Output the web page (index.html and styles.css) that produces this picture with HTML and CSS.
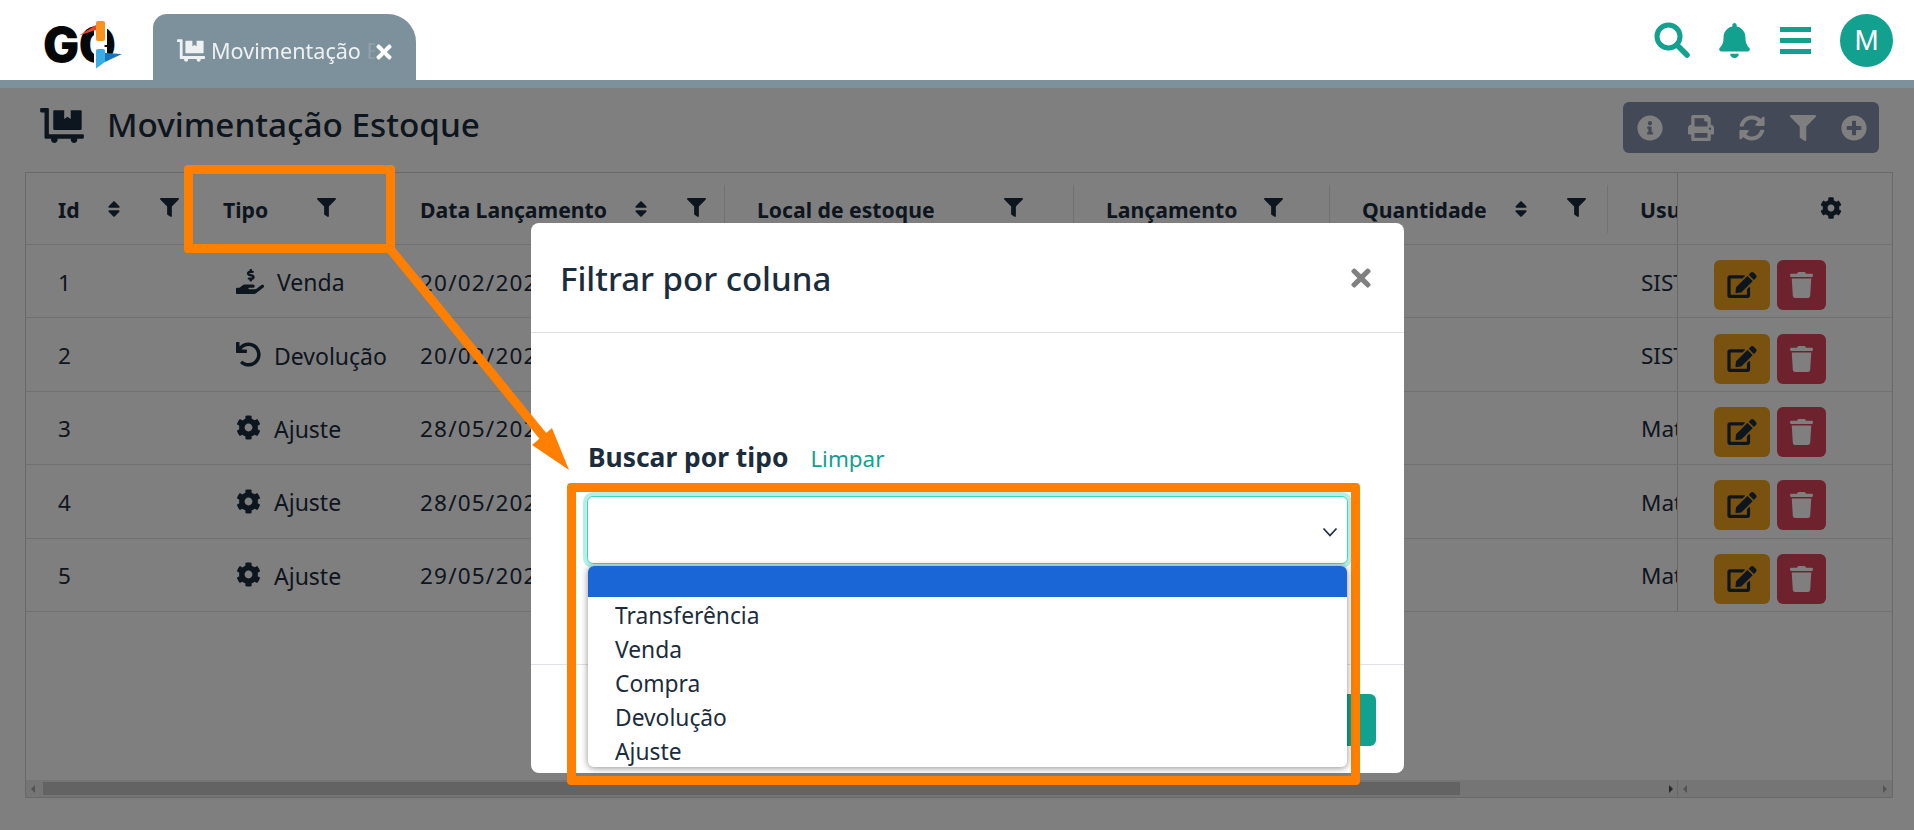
FILE: index.html
```html
<!DOCTYPE html>
<html lang="pt-BR">
<head>
  <meta charset="UTF-8" />
  <title>Movimentação Estoque</title>
  <link rel="stylesheet" href="styles.css">
</head>
<body>

<svg class="defs" xmlns="http://www.w3.org/2000/svg">
  <symbol id="i-filter" viewBox="0 0 512 512"><path d="M487.976 0H24.028C2.71 0-8.047 25.866 7.058 40.971L192 225.941V432c0 7.831 3.821 15.17 10.237 19.662l80 55.98C298.02 518.69 320 507.493 320 487.98V225.941l184.947-184.97C520.021 25.896 509.338 0 487.976 0z"/></symbol>
  <symbol id="i-sort" viewBox="0 0 320 512"><path d="M41 288h238c21.4 0 32.1 25.9 17 41L177 448c-9.4 9.4-24.6 9.4-33.9 0L24 329c-15.1-15.1-4.4-41 17-41zm255-105L177 64c-9.4-9.4-24.6-9.4-33.9 0L24 183c-15.1 15.1-4.4 41 17 41h238c21.4 0 32.1-25.9 17-41z"/></symbol>
  <symbol id="i-cog" viewBox="0 0 512 512"><path d="M487.4 315.7l-42.6-24.6c4.3-23.2 4.3-47 0-70.2l42.6-24.6c4.9-2.8 7.1-8.6 5.5-14-11.1-35.6-30-67.8-54.7-94.6-3.8-4.1-10-5.1-14.8-2.3L380.8 110c-17.9-15.4-38.5-27.3-60.8-35.1V25.8c0-5.6-3.9-10.5-9.4-11.7-36.7-8.2-74.3-7.8-109.2 0-5.5 1.2-9.4 6.1-9.4 11.7V75c-22.2 7.9-42.8 19.8-60.8 35.1L88.7 85.5c-4.9-2.8-11-1.9-14.8 2.3-24.7 26.7-43.6 58.9-54.7 94.6-1.7 5.4.6 11.2 5.5 14L67.3 221c-4.3 23.2-4.3 47 0 70.2l-42.6 24.6c-4.9 2.8-7.1 8.6-5.5 14 11.1 35.6 30 67.8 54.7 94.6 3.8 4.1 10 5.1 14.8 2.3l42.6-24.6c17.9 15.4 38.5 27.3 60.8 35.1v49.2c0 5.6 3.9 10.5 9.4 11.7 36.7 8.2 74.3 7.8 109.2 0 5.5-1.2 9.4-6.1 9.4-11.7v-49.2c22.2-7.9 42.8-19.8 60.8-35.1l42.6 24.6c4.9 2.8 11 1.9 14.8-2.3 24.7-26.7 43.6-58.9 54.7-94.6 1.5-5.5-.7-11.3-5.6-14.1zM256 336c-44.1 0-80-35.9-80-80s35.9-80 80-80 80 35.9 80 80-35.9 80-80 80z"/></symbol>
  <symbol id="i-dolly" viewBox="0 0 640 512"><path d="M208 320h384c8.8 0 16-7.2 16-16V48c0-8.8-7.2-16-16-16H448v128l-48-32-48 32V32H208c-8.8 0-16 7.2-16 16v256c0 8.8 7.2 16 16 16zm416 64H128V16c0-8.8-7.2-16-16-16H16C7.2 0 0 7.2 0 16v32c0 8.8 7.2 16 16 16h48v368c0 8.8 7.2 16 16 16h82.9c-1.8 5-2.9 10.4-2.9 16 0 26.5 21.5 48 48 48s48-21.5 48-48c0-5.6-1.2-11-2.9-16H451c-1.8 5-2.9 10.4-2.9 16 0 26.5 21.5 48 48 48s48-21.5 48-48c0-5.6-1.2-11-2.9-16H624c8.8 0 16-7.2 16-16v-32c0-8.8-7.2-16-16-16z"/></symbol>
  <symbol id="i-times" viewBox="0 0 352 512"><path d="M242.72 256l100.07-100.07c12.28-12.28 12.28-32.19 0-44.48l-22.24-22.24c-12.28-12.28-32.19-12.28-44.48 0L176 189.28 75.93 89.21c-12.28-12.28-32.19-12.28-44.48 0L9.21 111.45c-12.28 12.28-12.28 32.19 0 44.48L109.28 256 9.21 356.07c-12.28 12.28-12.28 32.19 0 44.48l22.24 22.24c12.28 12.28 32.2 12.28 44.48 0L176 322.72l100.07 100.07c12.28 12.28 32.2 12.28 44.48 0l22.24-22.24c12.28-12.28 12.28-32.19 0-44.48L242.72 256z"/></symbol>
  <symbol id="i-edit" viewBox="0 0 576 512"><path d="M402.6 83.2l90.2 90.2c3.8 3.8 3.8 10 0 13.8L274.4 405.6l-92.8 10.3c-12.4 1.4-22.9-9.1-21.5-21.5l10.3-92.8L388.8 83.2c3.8-3.8 10-3.8 13.8 0zm162-22.9l-48.8-48.8c-15.2-15.2-39.9-15.2-55.2 0l-35.4 35.4c-3.8 3.8-3.8 10 0 13.8l90.2 90.2c3.8 3.8 10 3.8 13.8 0l35.4-35.4c15.2-15.3 15.2-40 0-55.2zM384 346.2V448H64V128h229.8c3.2 0 6.2-1.3 8.5-3.5l40-40c7.6-7.6 2.2-20.5-8.5-20.5H48C21.5 64 0 85.5 0 112v352c0 26.5 21.5 48 48 48h352c26.5 0 48-21.5 48-48V306.2c0-10.7-12.9-16-20.5-8.5l-40 40c-2.2 2.3-3.5 5.3-3.5 8.5z"/></symbol>
  <symbol id="i-trash" viewBox="0 0 448 512"><path d="M432 32H312l-9.4-18.7A24 24 0 0 0 281.1 0H166.8a23.72 23.72 0 0 0-21.4 13.3L136 32H16A16 16 0 0 0 0 48v32a16 16 0 0 0 16 16h416a16 16 0 0 0 16-16V48a16 16 0 0 0-16-16zM53.2 467a48 48 0 0 0 47.9 45h245.8a48 48 0 0 0 47.9-45L416 128H32z"/></symbol>
</svg>

<header class="topbar">
  <div class="logo">
    <span class="logo-text">GO</span>
    <svg class="logo-mark" viewBox="0 0 100 80">
      <path d="M50 19h13v26H50zM50 47h13v23H50z" fill="#fff"/>
      <path d="M35 35.500 L52 25 V30 Z" fill="#e8452c"/>
      <rect x="52" y="21" width="9" height="20" rx="2" fill="#f7931e"/>
      <path d="M61 62 L78 54 L61 53 Z" fill="#1c75bc"/>
      <path d="M52 50.500 Q52 49 54 49 H59 Q61 49 61 51 V62 L52 68.500 Z" fill="#38ade6"/>
    </svg>
  </div>
  <div class="tab">
    <svg class="tab-icon"><use href="#i-dolly"/></svg>
    <span class="tab-label">Movimentação Estoque</span>
    <svg class="tab-close"><use href="#i-times"/></svg>
  </div>
  <div class="top-actions">
    <svg class="top-search" viewBox="0 0 36 36"><circle cx="14.500" cy="14.500" r="11.500" fill="none" stroke="#12a08f" stroke-width="5"/><path d="M23 23 L33 33" stroke="#12a08f" stroke-width="5.500" stroke-linecap="round"/></svg>
    <svg class="top-bell" viewBox="0 0 448 512"><path fill="#12a08f" d="M224 512c35.32 0 63.97-28.65 63.97-64H160.03c0 35.35 28.65 64 63.97 64zm215.39-149.71c-19.32-20.76-55.47-51.99-55.47-154.29 0-77.7-54.48-139.9-127.94-155.16V32c0-17.67-14.32-32-31.98-32s-31.98 14.33-31.98 32v20.84C118.56 68.1 64.08 130.3 64.08 208c0 102.3-36.15 133.53-55.47 154.29-6 6.45-8.66 14.16-8.61 21.71.11 16.4 12.98 32 32.1 32h383.8c19.12 0 32-15.6 32.1-32 .05-7.55-2.61-15.27-8.61-21.71z"/></svg>
    <div class="top-menu"><span></span><span></span><span></span></div>
    <div class="avatar">M</div>
  </div>
</header>
<div class="stripe"></div>

<main class="content">
  <div class="title-row">
    <div class="title">
      <svg class="title-icon"><use href="#i-dolly"/></svg>
      <h1>Movimentação Estoque</h1>
    </div>
    <div class="toolbar">
      <svg class="tool" viewBox="0 0 512 512"><path d="M256 8C119.043 8 8 119.083 8 256c0 136.997 111.043 248 248 248s248-111.003 248-248C504 119.083 392.957 8 256 8zm0 110c23.196 0 42 18.804 42 42s-18.804 42-42 42-42-18.804-42-42 18.804-42 42-42zm56 254c0 6.627-5.373 12-12 12h-88c-6.627 0-12-5.373-12-12v-24c0-6.627 5.373-12 12-12h12v-64h-12c-6.627 0-12-5.373-12-12v-24c0-6.627 5.373-12 12-12h64c6.627 0 12 5.373 12 12v100h12c6.627 0 12 5.373 12 12v24z"/></svg>
      <svg class="tool" viewBox="0 0 512 512"><path d="M448 192V77.25c0-8.49-3.37-16.62-9.37-22.63L393.37 9.37c-6-6-14.14-9.37-22.63-9.37H96C78.33 0 64 14.33 64 32v160c-35.35 0-64 28.65-64 64v112c0 8.84 7.16 16 16 16h48v96c0 17.67 14.33 32 32 32h320c17.67 0 32-14.33 32-32v-96h48c8.84 0 16-7.16 16-16V256c0-35.35-28.65-64-64-64zm-64 256H128v-96h256v96zm0-224H128V64h192v48c0 8.84 7.16 16 16 16h48v96zm48 72c-13.25 0-24-10.75-24-24 0-13.26 10.75-24 24-24s24 10.74 24 24c0 13.25-10.75 24-24 24z"/></svg>
      <svg class="tool" viewBox="0 0 512 512"><path d="M370.72 133.28C339.458 104.008 298.888 87.962 255.848 88c-77.458.068-144.328 53.178-162.791 126.85-1.344 5.363-6.122 9.15-11.651 9.15H24.103c-7.498 0-13.194-6.807-11.807-14.176C33.933 94.924 134.813 8 256 8c66.448 0 126.791 26.136 171.315 68.685L463.03 40.97C478.149 25.851 504 36.559 504 57.941V192c0 13.255-10.745 24-24 24H345.941c-21.382 0-32.09-25.851-16.971-40.971l41.75-41.749zM32 296h134.059c21.382 0 32.09 25.851 16.971 40.971l-41.75 41.75c31.262 29.273 71.835 45.319 114.876 45.28 77.418-.07 144.315-53.144 162.787-126.849 1.344-5.363 6.122-9.15 11.651-9.15h57.304c7.498 0 13.194 6.807 11.807 14.176C478.067 417.076 377.187 504 256 504c-66.448 0-126.791-26.136-171.315-68.685L48.97 471.03C33.851 486.149 8 475.441 8 454.059V320c0-13.255 10.745-24 24-24z"/></svg>
      <svg class="tool"><use href="#i-filter"/></svg>
      <svg class="tool" viewBox="0 0 512 512"><path d="M256 8C119 8 8 119 8 256s111 248 248 248 248-111 248-248S393 8 256 8zm144 276c0 6.6-5.4 12-12 12h-92v92c0 6.6-5.4 12-12 12h-56c-6.6 0-12-5.4-12-12v-92h-92c-6.6 0-12-5.4-12-12v-56c0-6.6 5.4-12 12-12h92v-92c0-6.600 5.4-12 12-12h56c6.6 0 12 5.4 12 12v92h92c6.6 0 12 5.4 12 12v56z"/></svg>
    </div>
  </div>

  <div class="grid">
    <div class="grid-body">
      <div class="grid-main">
        <div class="row row-head">
          <div class="th"><span class="th-label">Id</span><svg class="ic-sort"><use href="#i-sort"/></svg><svg class="ic-filter"><use href="#i-filter"/></svg></div>
          <div class="th"><span class="th-label th-tipo">Tipo</span><svg class="ic-filter"><use href="#i-filter"/></svg></div>
          <div class="th th-sep"><span class="th-label">Data Lançamento</span><svg class="ic-sort"><use href="#i-sort"/></svg><svg class="ic-filter"><use href="#i-filter"/></svg></div>
          <div class="th th-sep"><span class="th-label th-local">Local de estoque</span><svg class="ic-filter"><use href="#i-filter"/></svg></div>
          <div class="th th-sep"><span class="th-label">Lançamento</span><svg class="ic-filter"><use href="#i-filter"/></svg></div>
          <div class="th th-sep"><span class="th-label">Quantidade</span><svg class="ic-sort"><use href="#i-sort"/></svg><svg class="ic-filter"><use href="#i-filter"/></svg></div>
          <div class="th"><span class="th-label">Usuário</span></div>
        </div>
        <div class="row">
          <div class="td">1</div>
          <div class="td td-tipo"><svg class="ic-hand" viewBox="0 0 576 512"><path d="M271.06,144.3l54.27,14.3a8.59,8.59,0,0,1,6.63,8.1c0,4.6-4.09,8.4-9.12,8.4h-35.6a30,30,0,0,1-11.19-2.2c-5.24-2.2-11.28-1.7-15.3,2l-19,17.5a11.68,11.68,0,0,0-2.25,2.66,11.42,11.42,0,0,0,3.88,15.74,83.77,83.77,0,0,0,34.51,11.5V240c0,8.8,7.83,16,17.37,16h17.37c9.55,0,17.38-7.2,17.38-16V222.4c32.93-3.6,57.84-31,53.5-63-3.15-23-22.46-41.3-46.56-47.7L282.68,97.4a8.59,8.59,0,0,1-6.63-8.1c0-4.6,4.09-8.4,9.12-8.4h35.6A30,30,0,0,1,332,83.1c5.23,2.2,11.28,1.7,15.3-2l19-17.5A11.31,11.31,0,0,0,368.47,61a11.43,11.43,0,0,0-3.84-15.78,83.82,83.82,0,0,0-34.52-11.5V16c0-8.8-7.82-16-17.37-16H295.37C285.82,0,278,7.2,278,16V33.6c-32.89,3.6-57.85,31-53.51,63C227.63,119.6,247,137.9,271.06,144.3ZM565.27,328.1c-11.8-10.7-30.2-10-42.6,0L430.27,402a63.64,63.64,0,0,1-40,14H272a16,16,0,0,1,0-32h78.29c15.9,0,30.71-10.9,33.25-26.6a31.2,31.2,0,0,0,.46-5.46A32,32,0,0,0,352,320H192a117.66,117.66,0,0,0-74.1,26.29L71.4,384H16A16,16,0,0,0,0,400v96a16,16,0,0,0,16,16H372.77a64,64,0,0,0,40-14L564,377a32,32,0,0,0,1.28-48.9Z"/></svg>Venda</div>
          <div class="td td-date">20/02/2024</div><div class="td"></div><div class="td"></div><div class="td"></div>
          <div class="td td-user">SISTEMA</div>
        </div>
        <div class="row">
          <div class="td">2</div>
          <div class="td td-tipo"><svg class="ic-type" viewBox="0 0 512 512"><path d="M212.333 224.333H12c-6.627 0-12-5.373-12-12V12C0 5.373 5.373 0 12 0h48c6.627 0 12 5.373 12 12v78.112C117.773 39.279 184.26 7.47 258.175 8.007c136.906.994 246.448 111.623 246.157 248.532C504.041 393.258 393.12 504 256.333 504c-64.089 0-122.496-24.313-166.51-64.215-5.099-4.622-5.334-12.554-.467-17.42l33.967-33.967c4.474-4.474 11.662-4.717 16.401-.525C170.76 415.336 211.58 432 256.333 432c97.268 0 176-78.716 176-176 0-97.267-78.716-176-176-176-58.496 0-110.28 28.476-142.274 72.333h98.274c6.627 0 12 5.373 12 12v48c0 6.627-5.373 12-12 12z"/></svg>Devolução</div>
          <div class="td td-date">20/02/2024</div><div class="td"></div><div class="td"></div><div class="td"></div>
          <div class="td td-user">SISTEMA</div>
        </div>
        <div class="row">
          <div class="td">3</div>
          <div class="td td-tipo"><svg class="ic-type"><use href="#i-cog"/></svg>Ajuste</div>
          <div class="td td-date">28/05/2024</div><div class="td"></div><div class="td"></div><div class="td"></div>
          <div class="td td-user">Mateus</div>
        </div>
        <div class="row">
          <div class="td">4</div>
          <div class="td td-tipo"><svg class="ic-type"><use href="#i-cog"/></svg>Ajuste</div>
          <div class="td td-date">28/05/2024</div><div class="td"></div><div class="td"></div><div class="td"></div>
          <div class="td td-user">Mateus</div>
        </div>
        <div class="row">
          <div class="td">5</div>
          <div class="td td-tipo"><svg class="ic-type"><use href="#i-cog"/></svg>Ajuste</div>
          <div class="td td-date">29/05/2024</div><div class="td"></div><div class="td"></div><div class="td"></div>
          <div class="td td-user">Mateus</div>
        </div>
      </div>
      <div class="grid-fixed">
        <div class="fixed-head"><svg class="ic-gear"><use href="#i-cog"/></svg></div>
        <div class="fixed-row"><div class="btn-edit"><svg><use href="#i-edit"/></svg></div><div class="btn-del"><svg><use href="#i-trash"/></svg></div></div>
        <div class="fixed-row"><div class="btn-edit"><svg><use href="#i-edit"/></svg></div><div class="btn-del"><svg><use href="#i-trash"/></svg></div></div>
        <div class="fixed-row"><div class="btn-edit"><svg><use href="#i-edit"/></svg></div><div class="btn-del"><svg><use href="#i-trash"/></svg></div></div>
        <div class="fixed-row"><div class="btn-edit"><svg><use href="#i-edit"/></svg></div><div class="btn-del"><svg><use href="#i-trash"/></svg></div></div>
        <div class="fixed-row"><div class="btn-edit"><svg><use href="#i-edit"/></svg></div><div class="btn-del"><svg><use href="#i-trash"/></svg></div></div>
      </div>
    </div>
    <div class="grid-scroll">
      <div class="scroll-main"><i class="arrow-left"></i><div class="scroll-thumb"></div><i class="arrow-right dark"></i></div>
      <div class="scroll-fixed"><i class="arrow-left"></i><i class="arrow-right"></i></div>
    </div>
  </div>
</main>

<!-- backdrop + modal -->
<div class="backdrop">
  <div class="modal">
    <div class="modal-header">
      <h2>Filtrar por coluna</h2>
      <svg class="modal-close"><use href="#i-times"/></svg>
    </div>
    <div class="modal-body">
      <div class="field-label"><strong>Buscar por tipo</strong><a class="clear-link">Limpar</a></div>
      <div class="select-box">
        <svg class="chevron" viewBox="0 0 16 10"><path d="M1.500 1.500 L8 8.500 L14.500 1.500" fill="none" stroke="#1b2c3d" stroke-width="1.700"/></svg>
        <ul class="dropdown">
          <li class="selected"></li>
          <li>Transferência</li>
          <li>Venda</li>
          <li>Compra</li>
          <li>Devolução</li>
          <li>Ajuste</li>
        </ul>
      </div>
    </div>
    <div class="modal-footer"><div class="btn-apply"></div></div>
  </div>
</div>

<!-- orange marks drawn on top of the screenshot -->
<div class="mark mark-tipo"></div>
<div class="mark mark-select"></div>
<svg class="mark-arrow" viewBox="0 0 1914 830">
  <path d="M391 250 L547 441" stroke="#ff8000" stroke-width="9" fill="none"/>
  <path d="M569 470 L532 445 L552 428 Z" fill="#ff8000"/>
</svg>

</body>
</html>
```

FILE: styles.css
```css
* {
  box-sizing: border-box;
}

html, body {
  height: 830px;
  overflow: hidden;
}

body {
  margin: 0;
  position: relative;
  background: #fff;
  color: #1b2c3d;
  font-family: "Noto Sans", "Open Sans", sans-serif;
  font-size: 22.5px;
}

.defs {
  display: none;
}

/* top bar */
.topbar {
  display: flex;
  height: 80px;
  padding-left: 44px;
  background: #fff;
}

.logo {
  position: relative;
  width: 109px;
}

.logo-text {
  display: block;
  margin: 16px 0 0 -1px;
  color: #060808;
  font-family: Inter, sans-serif;
  font-size: 48px;
  font-weight: 900;
  line-height: 58px;
  letter-spacing: -0.5px;
}

.logo-mark {
  position: absolute;
  left: 0;
  top: 0;
  width: 100px;
  height: 80px;
}

.tab {
  display: flex;
  align-items: center;
  width: 263px;
  height: 66px;
  margin-top: 14px;
  padding: 6px 0 0 24px;
  background: #7d919c;
  border-radius: 14px 28px 0 0;
  color: #eef1f2;
}

.tab-icon {
  width: 28px;
  height: 23px;
  fill: #eef1f2;
  flex: none;
}

.tab-label {
  width: 164px;
  margin-left: 6px;
  overflow: hidden;
  white-space: nowrap;
  font-size: 21.6px;
  -webkit-mask-image: linear-gradient(to right, #000 91%, rgba(0, 0, 0, 0.25) 93%, rgba(0, 0, 0, 0.1) 100%);
}

.tab-close {
  width: 16px;
  height: 22px;
  margin-left: 1px;
  margin-top: 4px;
  fill: #fff;
  flex: none;
}

.top-actions {
  display: flex;
  align-items: center;
  margin-left: auto;
  padding-right: 21px;
}

.top-search {
  width: 36px;
  height: 36px;
}

.top-bell {
  width: 31px;
  height: 35px;
  margin-left: 29px;
}

.top-menu {
  display: flex;
  flex-direction: column;
  gap: 6px;
  width: 31px;
  margin-left: 30px;
}

.top-menu span {
  height: 5px;
  background: #12a08f;
}

.avatar {
  display: flex;
  align-items: center;
  justify-content: center;
  width: 53px;
  height: 53px;
  margin-left: 29px;
  border-radius: 50%;
  background: #12a08f;
  color: #fff;
  font-family: "Liberation Sans", sans-serif;
  font-size: 29px;
}

.stripe {
  height: 8px;
  background: #7d919c;
}

/* page */
.content {
  padding: 14px 21px 0 25px;
}

.title-row {
  display: flex;
  justify-content: space-between;
  height: 70px;
}

.title {
  display: flex;
  align-items: center;
  height: 46px;
  padding-left: 15px;
}

.title-icon {
  width: 44px;
  height: 35px;
  fill: #1b2c3d;
}

.title h1 {
  margin: -2px 0 0 23px;
  font-size: 33.3px;
  font-weight: 500;
}

.toolbar {
  display: flex;
  align-items: center;
  gap: 25px;
  width: 256px;
  height: 51px;
  margin-right: 14px;
  padding-left: 14px;
  background: #8692ac;
  border-radius: 6px;
}

.tool {
  width: 26px;
  height: 26px;
  fill: #fff;
}

/* table */
.grid {
  display: flex;
  flex-direction: column;
  height: 626px;
  border: 1px solid #d2d2d2;
}

.grid-body {
  display: flex;
  flex: 1;
  min-height: 0;
}

.grid-main {
  flex: 1;
  min-width: 0;
  overflow: hidden;
}

.row {
  display: grid;
  grid-template-columns: 165px 197px 337px 349px 256px 278px 200px;
  height: 73.4px;
  border-bottom: 1px solid #dee2e6;
}

.row-head {
  height: 72px;
}

.th {
  display: flex;
  align-items: center;
  height: 48px;
  margin-top: 12px;
  padding-left: 32px;
  font-size: 21.2px;
  font-weight: 700;
  white-space: nowrap;
}

.th-sep {
  border-right: 1px solid #dee2e6;
}

.th-label {
  margin-right: 27px;
}

.th-tipo {
  margin-right: 49px;
}

.th-local {
  margin-right: 69px;
}

.ic-sort {
  width: 14px;
  height: 20px;
  margin-right: 39px;
  fill: #1b2c3d;
}

.ic-filter {
  width: 19px;
  height: 19px;
  margin-top: -3px;
  fill: #1b2c3d;
}

.td {
  display: flex;
  align-items: center;
  padding: 2px 0 0 32px;
  white-space: nowrap;
}

.td-tipo {
  padding-left: 45px;
  gap: 13px;
  font-size: 23px;
}

.td-date {
  letter-spacing: 1.2px;
}

.td-user {
  padding-left: 33px;
}

.ic-hand {
  width: 28px;
  height: 25px;
  margin-top: -2px;
  fill: #1b2c3d;
}

.ic-type {
  width: 25px;
  height: 25px;
  margin-top: -2px;
  fill: #1b2c3d;
}

.grid-fixed {
  width: 215px;
  flex: none;
}

.fixed-head {
  display: flex;
  align-items: center;
  height: 72px;
  padding-left: 142px;
  border-left: 1px solid #d2d2d2;
  border-bottom: 1px solid #dee2e6;
}

.ic-gear {
  width: 22px;
  height: 22px;
  margin-top: -2px;
  fill: #1b2c3d;
}

.fixed-row {
  display: flex;
  align-items: center;
  gap: 7px;
  height: 73.4px;
  padding: 8px 0 0 36px;
  border-left: 1px solid #d2d2d2;
  border-bottom: 1px solid #dee2e6;
}

.btn-edit,
.btn-del {
  display: flex;
  align-items: center;
  justify-content: center;
  height: 50px;
  border-radius: 6px;
}

.btn-edit {
  width: 56px;
  background: #f4a420;
}

.btn-edit svg {
  width: 30px;
  height: 26px;
  fill: #1b2c3d;
}

.btn-del {
  width: 49px;
  background: #dc445a;
}

.btn-del svg {
  width: 23px;
  height: 26px;
  fill: #fff;
}

.grid-scroll {
  display: flex;
  height: 17px;
  background: #ebebeb;
}

.scroll-main {
  display: flex;
  align-items: center;
  flex: 1;
  padding: 0 4px 0 5px;
}

.scroll-thumb {
  width: 1417px;
  height: 13px;
  margin-left: 8px;
  background: #c6c6c6;
}

.scroll-fixed {
  display: flex;
  align-items: center;
  justify-content: space-between;
  width: 215px;
  padding: 0 5px;
  border-left: 1px solid #d2d2d2;
}

.arrow-left,
.arrow-right {
  width: 0;
  height: 0;
  border-top: 4px solid transparent;
  border-bottom: 4px solid transparent;
}

.arrow-left {
  border-right: 4px solid #a8a8a8;
}

.arrow-right {
  border-left: 4px solid #a8a8a8;
}

.arrow-right.dark {
  margin-left: auto;
  border-left-color: #505050;
}

/* modal */
.backdrop {
  position: absolute;
  left: 0;
  right: 0;
  top: 88px;
  bottom: 0;
  padding: 135px 0 0 531px;
  background: rgba(0, 0, 0, 0.5);
}

.modal {
  display: flex;
  flex-direction: column;
  width: 873px;
  height: 550px;
  background: #fff;
  border-radius: 8px;
}

.modal-header {
  display: flex;
  align-items: center;
  justify-content: space-between;
  height: 110px;
  padding: 0 33px 0 29px;
  border-bottom: 1px solid #dee2e6;
}

.modal-header h2 {
  margin: 2px 0 0;
  font-size: 33px;
  font-weight: 500;
}

.modal-close {
  width: 20px;
  height: 28px;
  margin-top: 1px;
  fill: #808080;
}

.modal-body {
  flex: 1;
  padding: 106px 56px 0 56px;
}

.field-label {
  display: flex;
  align-items: baseline;
  gap: 22px;
  margin-left: 1px;
  height: 57px;
  font-size: 26.4px;
}

.field-label strong {
  font-weight: 700;
}

.clear-link {
  color: #12a08f;
  font-size: 22.4px;
  line-height: 35px;
}

.select-box {
  position: relative;
  height: 68px;
  background: #fff;
  border: 1px solid #3fd6c6;
  border-radius: 6px;
  box-shadow: 0 0 0 4px rgba(18, 200, 180, 0.3);
}

.chevron {
  position: absolute;
  right: 9px;
  top: 30px;
  width: 16px;
  height: 10px;
}

.dropdown {
  position: absolute;
  left: 0;
  right: 0;
  top: 69px;
  z-index: 2;
  margin: 0;
  padding: 0;
  list-style: none;
  overflow: hidden;
  height: 201px;
  background: #fff;
  border-radius: 6px;
  box-shadow: 0 1px 7px rgba(0, 0, 0, 0.45);
  font-size: 22.8px;
}

.dropdown li {
  height: 34px;
  padding-left: 27px;
  line-height: 38px;
}

.dropdown .selected {
  height: 31px;
  background: #1a66d6;
}

.modal-footer {
  display: flex;
  justify-content: flex-end;
  height: 109px;
  padding: 29px 28px 0 0;
  border-top: 1px solid #dee2e6;
}

.btn-apply {
  width: 136px;
  height: 52px;
  background: #12a08f;
  border-radius: 6px;
}

/* orange annotation marks */
.mark {
  position: absolute;
  border: 9px solid #ff8000;
  border-radius: 4px;
}

.mark-tipo {
  left: 184px;
  top: 165px;
  width: 211px;
  height: 88px;
}

.mark-select {
  left: 567px;
  top: 483px;
  width: 793px;
  height: 302px;
}

.mark-arrow {
  position: absolute;
  left: 0;
  top: 0;
  width: 1914px;
  height: 830px;
  pointer-events: none;
}
```
